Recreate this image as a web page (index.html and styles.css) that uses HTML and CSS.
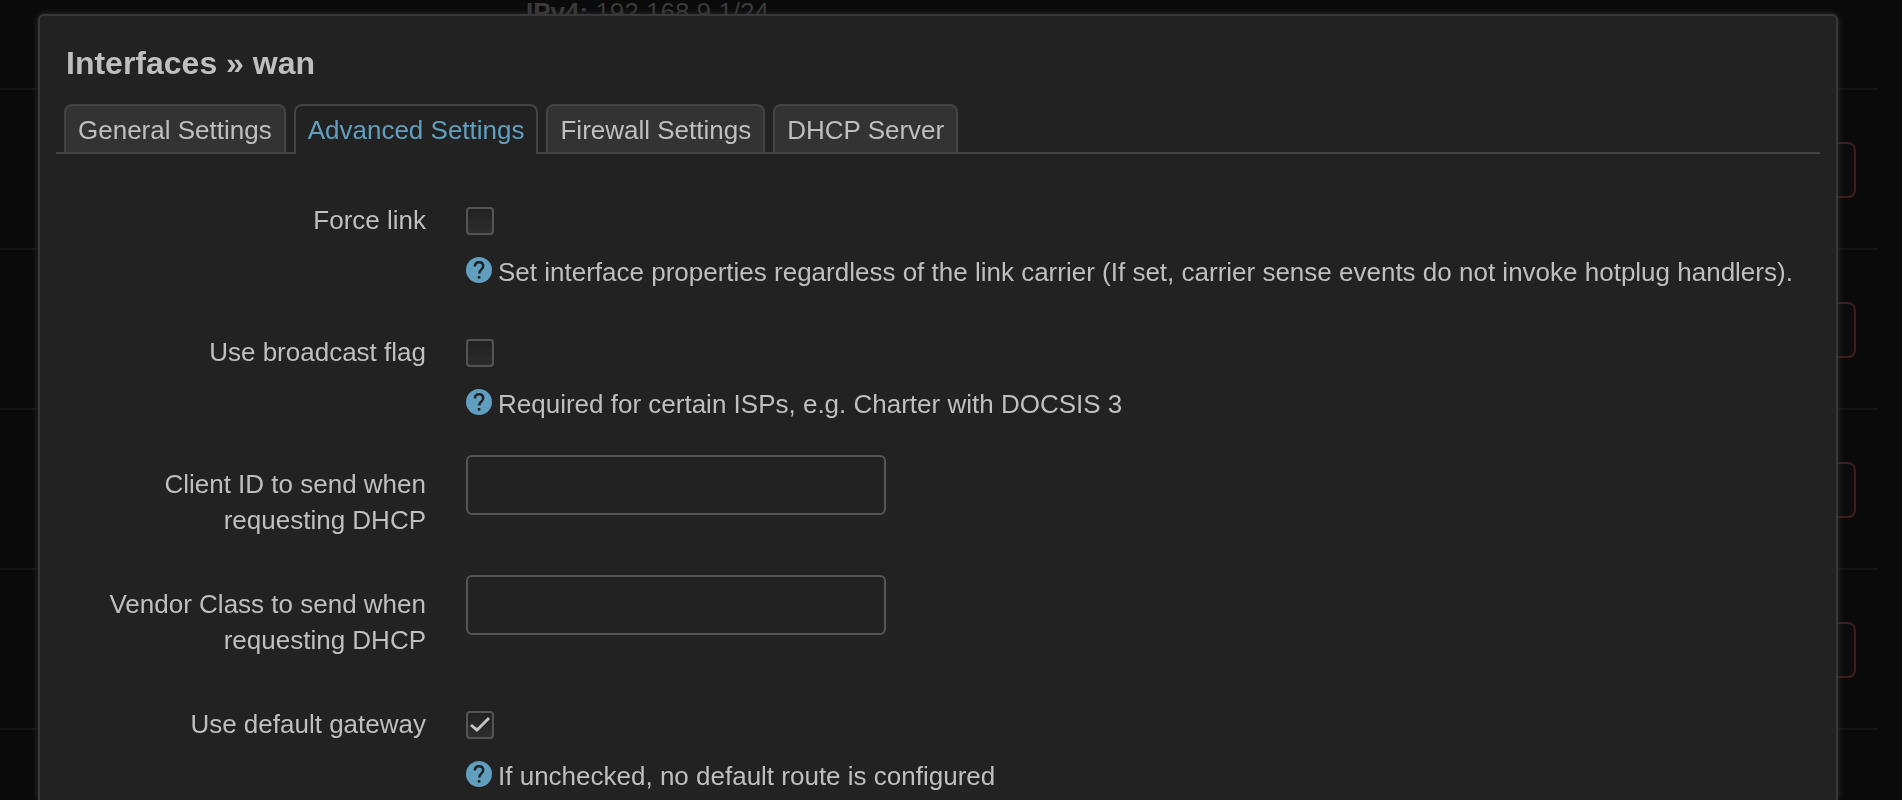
FILE: index.html
```html
<!DOCTYPE html>
<html lang="en">
<head>
    <meta charset="UTF-8">
    <meta name="viewport" content="width=device-width, initial-scale=1.0">
    <title>Interfaces - LuCI</title>
    <link rel="stylesheet" href="styles.css">
</head>
<body>
    <!-- interface list behind the modal -->
    <div class="page">
        <div class="iface-row first">
            <div class="iface-info"><strong>IPv4:</strong> 192.168.9.1/24</div>
        </div>
        <div class="iface-row"><button type="button" class="btn-remove" aria-label="Delete"></button></div>
        <div class="iface-row"><button type="button" class="btn-remove" aria-label="Delete"></button></div>
        <div class="iface-row"><button type="button" class="btn-remove" aria-label="Delete"></button></div>
        <div class="iface-row"><button type="button" class="btn-remove" aria-label="Delete"></button></div>
        <div class="iface-row last"></div>
    </div>

    <div class="overlay">
        <div class="modal" role="dialog" aria-labelledby="modalTitle">
            <h4 id="modalTitle">Interfaces » wan</h4>

            <ul class="tabs">
                <li><a href="#general">General Settings</a></li>
                <li class="active"><a href="#advanced">Advanced Settings</a></li>
                <li><a href="#firewall">Firewall Settings</a></li>
                <li><a href="#dhcp">DHCP Server</a></li>
            </ul>

            <form class="settings">
                <div class="field">
                    <label for="forceLink">Force link</label>
                    <div class="control">
                        <input type="checkbox" id="forceLink">
                        <div class="description">
                            <svg class="help" viewBox="0 0 26 26"><circle cx="13" cy="13" r="13"/><path d="M8.9 9.6C8.9 6.8 10.6 5.3 13 5.3s4.2 1.5 4.2 3.9c0 3.4-4 3.6-4 7.2"/><rect x="11.8" y="19" width="2.6" height="2.6"/></svg>
                            <span>Set interface properties regardless of the link carrier (If set, carrier sense events do not invoke hotplug handlers).</span>
                        </div>
                    </div>
                </div>

                <div class="field">
                    <label for="broadcast">Use broadcast flag</label>
                    <div class="control">
                        <input type="checkbox" id="broadcast">
                        <div class="description">
                            <svg class="help" viewBox="0 0 26 26"><circle cx="13" cy="13" r="13"/><path d="M8.9 9.6C8.9 6.8 10.6 5.3 13 5.3s4.2 1.5 4.2 3.9c0 3.4-4 3.6-4 7.2"/><rect x="11.8" y="19" width="2.6" height="2.6"/></svg>
                            <span>Required for certain ISPs, e.g. Charter with DOCSIS 3</span>
                        </div>
                    </div>
                </div>

                <div class="field">
                    <label for="clientId">Client ID to send when requesting DHCP</label>
                    <div class="control">
                        <input type="text" id="clientId">
                    </div>
                </div>

                <div class="field">
                    <label for="vendorClass">Vendor Class to send when requesting DHCP</label>
                    <div class="control">
                        <input type="text" id="vendorClass">
                    </div>
                </div>

                <div class="field">
                    <label for="defaultGateway">Use default gateway</label>
                    <div class="control">
                        <input type="checkbox" id="defaultGateway" checked>
                        <div class="description">
                            <svg class="help" viewBox="0 0 26 26"><circle cx="13" cy="13" r="13"/><path d="M8.9 9.6C8.9 6.8 10.6 5.3 13 5.3s4.2 1.5 4.2 3.9c0 3.4-4 3.6-4 7.2"/><rect x="11.8" y="19" width="2.6" height="2.6"/></svg>
                            <span>If unchecked, no default route is configured</span>
                        </div>
                    </div>
                </div>
            </form>
        </div>
    </div>
</body>
</html>
```

FILE: styles.css
```css
* {
    margin: 0;
    padding: 0;
    box-sizing: border-box;
}

body {
    font-family: "Helvetica Neue", "Liberation Sans", Arial, sans-serif;
    font-size: 26px;
    line-height: 36px;
    color: #bfbfbf;
    background: #0a0a0a;
    height: 100vh;
    overflow: hidden;
}

/* Background page */
.page {
    padding-right: 24px;
}

.iface-row {
    display: flex;
    align-items: center;
    justify-content: flex-end;
    height: 160px;
    padding: 2px 22px 0 0;
    border-top: 2px solid #141414;
}

.iface-row.first {
    display: block;
    height: 88px;
    padding: 0;
    border-top: 0;
}

.iface-row.last {
    height: auto;
}

.iface-info {
    margin-left: 526px;
    line-height: 24px;
    color: #3a3a3a;
}

.btn-remove {
    width: 120px;
    height: 56px;
    background: #0c0c0c;
    border: 2px solid #401d1b;
    border-radius: 8px;
}

/* Modal */
.overlay {
    position: fixed;
    inset: 0;
    display: flex;
    padding: 14px 64px 0 38px;
}

.modal {
    flex: 1;
    padding: 27px 16px 0;
    background: #222;
    border: 2px solid #383838;
    border-bottom: 0;
    border-radius: 6px 6px 0 0;
    box-shadow: 0 0 6px #333;
}

h4 {
    padding-left: 10px;
    font-size: 32px;
    line-height: 40px;
}

/* Tabs */
.tabs {
    display: flex;
    gap: 8px;
    margin-top: 21px;
    padding-left: 8px;
    list-style: none;
    border-bottom: 2px solid #444;
}

.tabs li {
    height: 48px;
    padding: 6px 12px 0;
    background: #333;
    border: 2px solid #444;
    border-bottom: 0;
    border-radius: 8px 8px 0 0;
}

.tabs li.active {
    height: 50px;
    margin-bottom: -2px;
    background: #222;
}

.tabs a {
    color: inherit;
    text-decoration: none;
}

.tabs .active a {
    color: #609fc0;
}

/* Form */
.settings {
    display: flex;
    flex-direction: column;
    gap: 33px;
    padding: 37px 0 0 10px;
}

.field {
    display: flex;
    gap: 40px;
}

.field label {
    width: 360px;
    padding: 11px 0 4px;
    text-align: right;
}

.control {
    flex: 1;
}

input[type="text"] {
    display: block;
    width: 420px;
    height: 60px;
    padding: 0 12px;
    font: inherit;
    color: inherit;
    background: #222;
    border: 2px solid #555;
    border-radius: 6px;
}

input[type="checkbox"] {
    appearance: none;
    display: block;
    width: 28px;
    height: 28px;
    margin: 16px 0 19px;
    background: linear-gradient(#222, #2c2c2c);
    border: 2px solid #555;
    border-radius: 4px;
}

input[type="checkbox"]:checked::before {
    content: "";
    display: block;
    width: 24px;
    height: 24px;
    background: #c4c4c4;
    clip-path: polygon(2px 13px, 4px 11px, 9px 15px, 20px 4px, 22px 6px, 9px 19px);
}

.description {
    display: flex;
    align-items: flex-start;
    gap: 6px;
}

.help {
    flex: none;
    width: 26px;
    height: 26px;
    margin-top: 3px;
}

.help circle {
    fill: #609fc0;
}

.help path {
    fill: none;
    stroke: #222;
    stroke-width: 2.5;
}

.help rect {
    fill: #222;
}
```
